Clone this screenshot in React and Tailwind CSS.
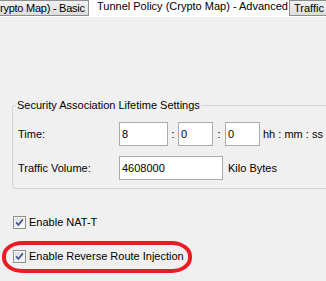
import React from "react";

const CheckBox = () => (
  <svg width="13" height="13" viewBox="0 0 13 13" className="shrink-0">
    <defs>
      <linearGradient id="cbFill" x1="0" y1="0" x2="1" y2="1">
        <stop offset="0" stopColor="#dcdcdc" />
        <stop offset="1" stopColor="#fafafa" />
      </linearGradient>
    </defs>
    <rect x="0.5" y="0.5" width="12" height="12" fill="#f4f4f4" stroke="#8e8f8f" />
    <rect x="2" y="2" width="9" height="9" fill="url(#cbFill)" />
    <path d="M3.2 6.4 L5.4 9 L9.8 3.4" fill="none" stroke="#3f5499" strokeWidth="1.7" />
  </svg>
);

const Field = ({ value, w, h = "h-[24px]" }) => (
  <div
    className={`${w} ${h} shrink-0 bg-white border border-[#ababab] flex items-center pl-[2px]`}
  >
    {value}
  </div>
);

const App = () => {
  return (
    <div className="w-[326px] h-[281px] overflow-hidden bg-[#f0f0f0] font-['Liberation_Sans',Arial,sans-serif] text-[11px] text-black leading-[13px]">
      {/* tab strip */}
      <div className="flex h-[17px] bg-white whitespace-nowrap">
        <div className="w-[89px] h-[16px] shrink-0 flex items-center tracking-[-0.25px] border-y border-r border-[#8e8f8f] bg-linear-to-b from-[#f2f2f2] to-[#dcdcdc]">
          rypto Map) - Basic
        </div>
        <div className="w-[200px] h-[17px] shrink-0 bg-white pl-[8px]">
          Tunnel Policy (Crypto Map) - Advanced
        </div>
        <div className="h-[16px] grow flex items-center pl-[4px] border-y border-l border-[#8e8f8f] bg-linear-to-b from-[#f2f2f2] to-[#dcdcdc]">
          Traffic
        </div>
      </div>

      {/* lifetime group */}
      <fieldset className="mt-[82px] ml-[12px] w-[330px] min-w-0 border border-[#d5d5d5] rounded-[3px] px-[5px] pb-[8px]">
        <legend className="-ml-[2px] px-[1px]">Security Association Lifetime Settings</legend>
        <div className="flex items-center mt-[10px]">
          <div className="w-[101px] shrink-0">Time:</div>
          <Field value="8" w="w-[49px]" />
          <div className="w-[10px] text-center shrink-0">:</div>
          <Field value="0" w="w-[35px]" />
          <div className="w-[12px] text-center shrink-0">:</div>
          <Field value="0" w="w-[35px]" />
          <div className="ml-[3px] whitespace-nowrap">hh : mm : ss</div>
        </div>
        <div className="flex items-center mt-[10px]">
          <div className="w-[101px] shrink-0">Traffic Volume:</div>
          <Field value="4608000" w="w-[104px]" />
          <div className="ml-[5px] whitespace-nowrap">Kilo Bytes</div>
        </div>
      </fieldset>

      {/* options */}
      <div className="ml-[13px] mt-[27px] flex items-center gap-[3px] h-[13px]">
        <CheckBox />
        <span>Enable NAT-T</span>
      </div>
      <div className="relative ml-[13px] mt-[21px] flex items-center gap-[3px] h-[13px]">
        <CheckBox />
        <span className="whitespace-nowrap">Enable Reverse Route Injection</span>
        <div className="absolute -left-[11px] -top-[9px] w-[190px] h-[32px] border-4 border-[#ed1c24] rounded-[20px/15px] pointer-events-none" />
      </div>
    </div>
  );
};

export default App;
